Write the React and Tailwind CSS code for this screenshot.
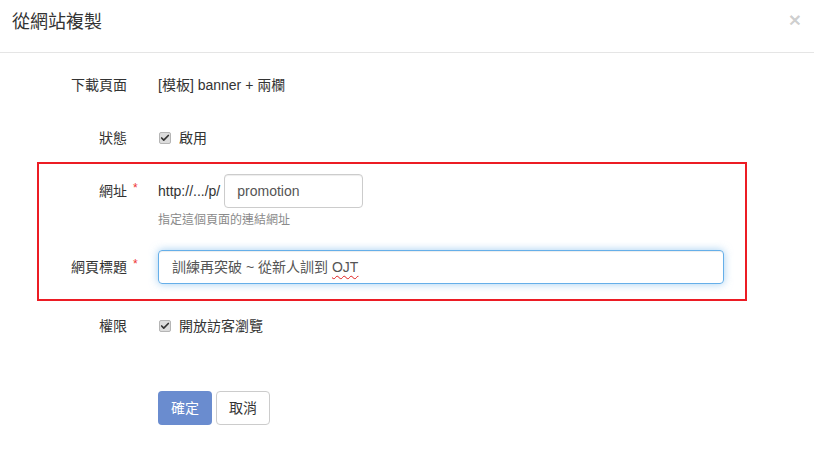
import { Check } from 'lucide-react';

function Row({ label, required, children, className = '' }) {
  return (
    <div className={`flex items-center ${className}`}>
      <div className="w-[127px] shrink-0 text-right">
        <span className="relative text-[14px] text-[#333]">
          {label}
          {required && (
            <span className="absolute left-full top-[-4px] ml-[6px] text-[12px] text-[#e33]">*</span>
          )}
        </span>
      </div>
      <div className="ml-[31px] flex items-center">{children}</div>
    </div>
  );
}

function Tick({ text }) {
  return (
    <div className="flex items-center">
      <span className="w-[12px] h-[12px] rounded-[2px] bg-[#dcdcdc] border border-[#b5b5b5] flex items-center justify-center ml-[1px]">
        <Check className="w-[10px] h-[10px] text-[#333]" strokeWidth={4} />
      </span>
      <span className="ml-[8px] text-[14px] text-[#333]">{text}</span>
    </div>
  );
}

export default function App() {
  return (
    <div
      className="relative w-[814px] h-[462px] bg-white text-[#333]"
      style={{ fontFamily: '"Liberation Sans", "Noto Sans CJK TC", sans-serif' }}
    >
      {/* Header */}
      <div className="h-[53px] border-b border-[#e5e5e5] flex items-start justify-between pl-3 pr-[13px] pt-[12px]">
        <h4 className="text-[18px] leading-[20px] text-[#333]">從網站複製</h4>
        <span className="text-[21px] leading-[16px] font-bold text-black/20">×</span>
      </div>

      {/* Body */}
      <div className="pt-[22px]">
        <Row label="下載頁面" className="h-5">
          <span className="text-[14px]">[模板] banner + 兩欄</span>
        </Row>

        <Row label="狀態" className="h-5 mt-[33px]">
          <Tick text="啟用" />
        </Row>

        <Row label="網址" required className="h-[34px] mt-[26px]">
          <span className="text-[14px]">http://.../p/</span>
          <div className="ml-[4px] w-[139px] h-[34px] rounded-[4px] border border-[#ccc] flex items-center pl-[12px] text-[14px] text-[#555] shadow-[inset_0_1px_1px_rgba(0,0,0,0.075)]">
            promotion
          </div>
        </Row>
        <div className="pl-[158px] mt-[4px] text-[12px] leading-[17px] text-[#8a8a8a]">指定這個頁面的連結網址</div>

        <Row label="網頁標題" required className="h-[34px] mt-[21px]">
          <div className="w-[566px] h-[34px] rounded-[4px] border border-[#66afe9] flex items-center pl-[13px] text-[14px] text-[#555] shadow-[inset_0_1px_1px_rgba(0,0,0,0.075),0_0_8px_rgba(102,175,233,0.6)]">
            訓練再突破 ~ 從新人訓到{' '}
            <span className="ml-[4px] underline decoration-wavy decoration-[#e02020] underline-offset-[3px] decoration-[1px]">OJT</span>
          </div>
        </Row>

        <Row label="權限" className="h-5 mt-[32px]">
          <Tick text="開放訪客瀏覽" />
        </Row>

        <div className="pl-[158px] mt-[55px] flex gap-[4px]">
          <button className="w-[54px] h-[34px] rounded-[4px] bg-[#6a8ccf] text-white text-[14px]">確定</button>
          <button className="w-[54px] h-[34px] rounded-[4px] border border-[#ccc] bg-white text-[#333] text-[14px]">取消</button>
        </div>
      </div>

      {/* annotation box */}
      <div className="absolute left-[37px] top-[162px] w-[710px] h-[139px] border-2 border-[#ec1c24] pointer-events-none" />
    </div>
  );
}
